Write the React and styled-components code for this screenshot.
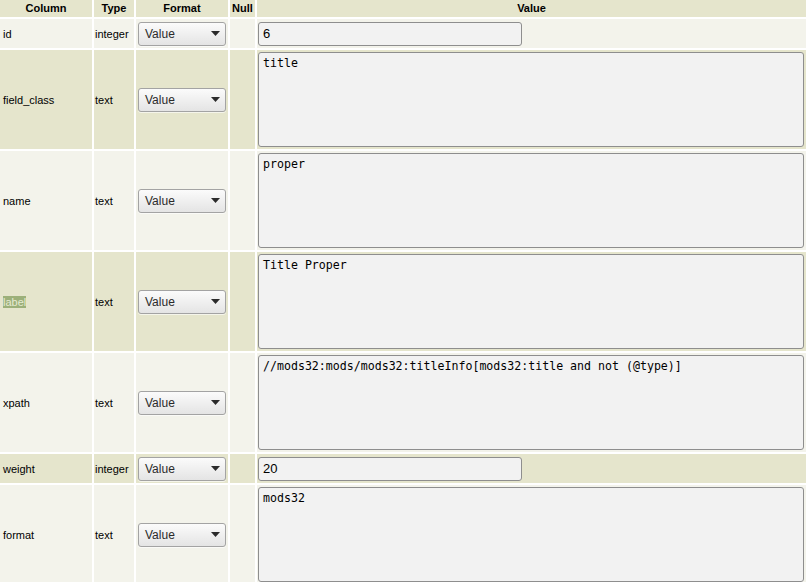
import React from "react";
import styled, { createGlobalStyle } from "styled-components";

const Global = createGlobalStyle`
  html, body { margin: 0; padding: 0; background: #ffffff; }
  body { font-family: "Liberation Sans", Arial, sans-serif; overflow: hidden; }
`;

const Page = styled.div`
  width: 806px;
  height: 582px;
  overflow: hidden;
`;

const Table = styled.table`
  border-collapse: separate;
  border-spacing: 2px;
  margin: -2px 0 0 -2px;
  width: 810px;
  table-layout: fixed;
`;

const Th = styled.th`
  background: #e5e5cc;
  height: 17px;
  padding: 0;
  font-size: 11px;
  font-weight: bold;
  color: #000;
  text-align: center;
  vertical-align: middle;
  line-height: 17px;
`;

const Tr = styled.tr`
  background: ${(p) => (p.$even ? "#e5e5cc" : "#f3f3eb")};
`;

const Td = styled.td`
  padding: 0 0 0 ${(p) => p.$pl || 0}px;
  height: ${(p) => (p.$tall ? 99 : 29)}px;
  font-size: 11px;
  color: #000;
  vertical-align: middle;
  white-space: nowrap;
`;

const ValueTd = styled.td`
  padding: 0 2px 0 1px;
  height: ${(p) => (p.$tall ? 99 : 29)}px;
  vertical-align: middle;
`;

const Marked = styled.span`
  background: #9cb07a;
  color: #e6ebd2;
`;

const SelectBox = styled.div`
  box-sizing: border-box;
  width: 88px;
  height: 24px;
  display: flex;
  align-items: center;
  justify-content: space-between;
  padding: 0 5px 0 6px;
  border: 1px solid #a3a3a3;
  border-radius: 3px;
  background: linear-gradient(#fbfbfb, #e4e4e4);
  box-shadow: 0 1px 0 rgba(255, 255, 255, 0.6);
  font-family: "Liberation Sans", Arial, sans-serif;
  font-size: 12px;
  color: #2a2a2a;
`;

const Input = styled.input`
  box-sizing: border-box;
  display: block;
  width: 264px;
  height: 24px;
  margin: 0;
  padding: 0 4px;
  border: 1px solid #8e8e8e;
  border-radius: 3px;
  background: #f2f2f2;
  font-family: "Liberation Sans", Arial, sans-serif;
  font-size: 13px;
  color: #000;
  outline: none;
`;

const TextArea = styled.textarea`
  box-sizing: border-box;
  display: block;
  width: 546px;
  height: 95px;
  margin: 0;
  padding: 3px 4px 2px;
  border: 1px solid #8e8e8e;
  border-radius: 3px;
  background: #f2f2f2;
  font-family: "DejaVu Sans Mono", monospace;
  font-size: 11.6px;
  line-height: 14px;
  color: #000;
  resize: none;
  outline: none;
  overflow: hidden;
`;

const Arrow = () => (
  <svg width="9" height="5" viewBox="0 0 9 5">
    <path d="M0 0 H9 L4.5 5 Z" fill="#2b2b2b" />
  </svg>
);

const rows = [
  { name: "id", type: "integer", value: "6", tall: false },
  { name: "field_class", type: "text", value: "title", tall: true },
  { name: "name", type: "text", value: "proper", tall: true },
  { name: "label", type: "text", value: "Title Proper", tall: true, marked: true },
  {
    name: "xpath",
    type: "text",
    value: "//mods32:mods/mods32:titleInfo[mods32:title and not (@type)]",
    tall: true,
  },
  { name: "weight", type: "integer", value: "20", tall: false },
  { name: "format", type: "text", value: "mods32", tall: true },
];

export default function App() {
  return (
    <Page>
      <Global />
      <Table>
        <colgroup>
          <col style={{ width: 92 }} />
          <col style={{ width: 40 }} />
          <col style={{ width: 92 }} />
          <col style={{ width: 25 }} />
          <col />
        </colgroup>
        <thead>
          <tr>
            <Th>Column</Th>
            <Th>Type</Th>
            <Th>Format</Th>
            <Th>Null</Th>
            <Th>Value</Th>
          </tr>
        </thead>
        <tbody>
          {rows.map((r, i) => (
            <Tr key={r.name} $even={i % 2 === 1}>
              <Td $tall={r.tall} $pl={3}>
                {r.marked ? <Marked>{r.name}</Marked> : r.name}
              </Td>
              <Td $tall={r.tall} $pl={1}>{r.type}</Td>
              <Td $tall={r.tall} $pl={2}>
                <SelectBox>
                  <span>Value</span>
                  <Arrow />
                </SelectBox>
              </Td>
              <Td $tall={r.tall} />
              <ValueTd $tall={r.tall}>
                {r.tall ? (
                  <TextArea defaultValue={r.value} />
                ) : (
                  <Input defaultValue={r.value} />
                )}
              </ValueTd>
            </Tr>
          ))}
        </tbody>
      </Table>
    </Page>
  );
}
